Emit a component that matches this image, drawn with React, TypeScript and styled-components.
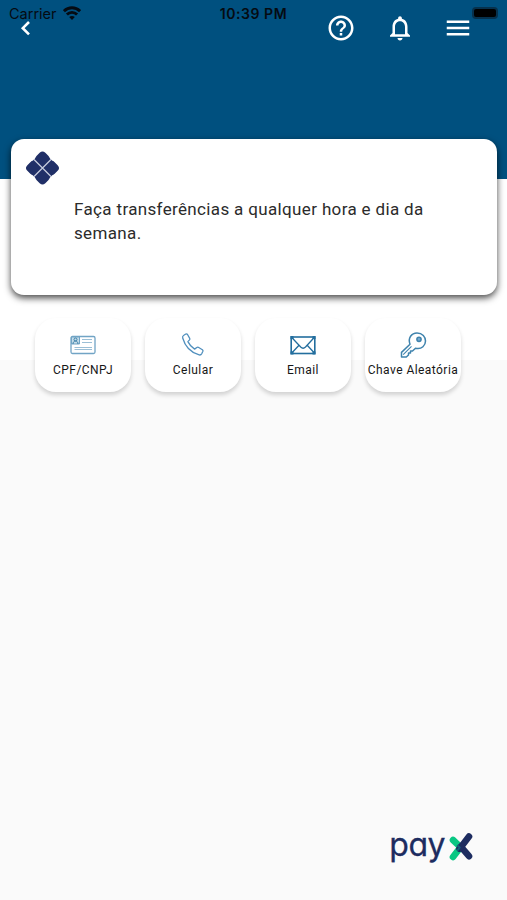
import React from 'react';
import styled, { createGlobalStyle } from 'styled-components';

const GlobalStyle = createGlobalStyle`
  * { box-sizing: border-box; }
  body { margin: 0; background: #fafafa; font-family: Roboto, sans-serif; }
`;

const Screen = styled.div`
  width: 507px;
  height: 900px;
  display: flex;
  flex-direction: column;
  background: #fafafa;
  overflow: hidden;
`;

const Header = styled.header`
  height: 179px;
  flex: none;
  background: #00507f;
`;

const StatusBar = styled.div`
  height: 28px;
  padding: 0 9px;
  display: grid;
  grid-template-columns: 1fr auto 1fr;
  align-items: center;
  color: #050b12;
  font: 500 14.5px/28px Inter, sans-serif;
`;

const Carrier = styled.div`
  display: flex;
  align-items: center;
  gap: 6px;
  font-weight: 400;
  letter-spacing: 0;
  svg { margin-bottom: 2px; }
`;

const Clock = styled.span`
  font-weight: 600;
  font-size: 14px;
  letter-spacing: 0.55px;
`;

const Battery = styled.span`
  justify-self: end;
  width: 26px;
  height: 12px;
  margin-bottom: 2px;
  border: 2px solid #06314d;
  border-radius: 4px;
  background: #000;
`;

const NavBar = styled.nav`
  height: 30px;
  margin-top: -15px;
  padding: 0 34px 0 9px;
  display: flex;
  align-items: center;
  justify-content: space-between;
  color: #fff;
`;

const NavActions = styled.div`
  display: flex;
  gap: 28.5px;
`;

const IconButton = styled.button`
  width: 30px;
  height: 30px;
  padding: 0;
  border: 0;
  background: none;
  color: inherit;
  display: grid;
  place-items: center;
`;

const Panel = styled.section`
  height: 181px;
  flex: none;
  background: #fff;
`;

const PixCard = styled.article`
  position: relative;
  height: 156px;
  margin: -40px 10px 0 10.5px;
  padding: 12px 15px;
  border-radius: 13px;
  background: #fff;
  box-shadow: 0 3px 7px 0 rgba(0, 0, 0, 0.72);
  svg { display: block; }
`;

const CardText = styled.p`
  width: 380px;
  margin: 12px 0 0 48.5px;
  color: #2b2b2b;
  font-size: 17px;
  line-height: 24px;
  letter-spacing: 0.35px;
`;

const KeyOptions = styled.div`
  display: flex;
  gap: 14px;
  margin: 23px 0 0 35px;
`;

const KeyOption = styled.button`
  width: 96px;
  height: 74px;
  padding: 13px 0 0;
  border: 0;
  border-radius: 21px;
  background: #fff;
  box-shadow: 0 3px 4px rgba(0, 0, 0, 0.16);
  color: #171717;
  display: flex;
  flex-direction: column;
  align-items: center;
  font: 400 12px/16px Roboto, sans-serif;
  letter-spacing: 0.45px;
  white-space: nowrap;
  svg { display: block; margin-bottom: 3px; flex: none; }
`;

const Footer = styled.footer`
  margin: auto 34px 32px auto;
  display: flex;
  align-items: center;
  gap: 4px;
`;

const LogoText = styled.span`
  padding-bottom: 4px;
  color: #1d2c60;
  font: 400 32px/38px Inter, sans-serif;
  font-feature-settings: 'cv11', 'ss01';
  letter-spacing: -0.5px;
  -webkit-text-stroke: 0.3px #1d2c60;
`;

const ChevronIcon = () => (
  <svg width="30" height="30" viewBox="0 0 30 30" fill="none" stroke="currentColor" strokeWidth="2.6">
    <path d="m20 9-6.2 6.2 6.2 6.2" />
  </svg>
);

const HelpIcon = () => (
  <svg width="30" height="30" viewBox="0 0 24 24" fill="currentColor">
    <path d="M11 18h2v-2h-2v2zm1-16C6.48 2 2 6.48 2 12s4.48 10 10 10 10-4.48 10-10S17.52 2 12 2zm0 18c-4.41 0-8-3.59-8-8s3.59-8 8-8 8 3.59 8 8-3.59 8-8 8zm0-14c-2.21 0-4 1.79-4 4h2c0-1.1.9-2 2-2s2 .9 2 2c0 2-3 1.75-3 5h2c0-2.25 3-2.5 3-5 0-2.21-1.79-4-4-4z" />
  </svg>
);

const BellIcon = () => (
  <svg width="30" height="30" viewBox="0 0 24 24" fill="currentColor">
    <path d="M12 22c1.1 0 2-.9 2-2h-4c0 1.1.9 2 2 2zm6-6v-5c0-3.07-1.63-5.64-4.5-6.32V4c0-.83-.67-1.5-1.5-1.5s-1.5.67-1.5 1.5v.68C7.64 5.36 6 7.92 6 11v5l-2 2v1h16v-1l-2-2zm-2 1H8v-6c0-2.48 1.51-4.5 4-4.5s4 2.02 4 4.5v6z" />
  </svg>
);

const MenuIcon = () => (
  <svg width="30" height="30" viewBox="0 0 24 24" fill="currentColor">
    <path d="M3 18h18v-2H3v2zm0-5h18v-2H3v2zm0-7v2h18V6H3z" />
  </svg>
);

const WifiIcon = () => (
  <svg width="18" height="14" viewBox="0 0 18 14" fill="none" stroke="currentColor" strokeWidth="2.9">
    <path d="M.9 5.2C5.5.6 12.5.6 17.1 5.2M3.9 8.5c2.9-2.9 7.3-2.9 10.2 0" />
    <path d="M9 13.9 6.2 11c1.6-1.5 4-1.5 5.6 0z" fill="currentColor" stroke="none" />
  </svg>
);

const PixIcon = () => (
  <svg width="34" height="34" viewBox="-16.5 -17 34 34" fill="#202f67">
    <g transform="rotate(45)">
      <rect x="-12" y="-12" width="24" height="24" rx="3.8" />
      <rect x="-12.7" y="-12.7" width="12.2" height="12.2" rx="4" />
      <rect x=".5" y="-12.7" width="12.2" height="12.2" rx="4" />
      <rect x="-12.7" y=".5" width="12.2" height="12.2" rx="4" />
      <rect x=".5" y=".5" width="12.2" height="12.2" rx="4" />
      <path d="M0-12V12M-12 0H12" stroke="#c5cbdc" strokeWidth="1.3" />
    </g>
  </svg>
);

const IdIcon = () => (
  <svg width="28" height="28" viewBox="0 0 28 28" fill="none" stroke="#71a4c5">
    <rect x="2" y="5.5" width="24" height="17" rx="1.5" strokeWidth="1.3" />
    <path d="M2.5 6h8v7h-8z" fill="#c5dce9" />
    <circle cx="6.5" cy="8.5" r="1.5" stroke="#397fa8" />
    <path d="M4 13c0-4 5-4 5 0" stroke="#397fa8" />
    <path d="M13 8.5h10M13 11.5h10M5.5 16.5H23M5.5 18.5H23" strokeWidth="1" opacity=".7" />
  </svg>
);

const PhoneIcon = () => (
  <svg width="28" height="28" viewBox="0 0 28 28" fill="none" stroke="#508fbd" strokeWidth="1.3" strokeLinejoin="round">
    <path d="M4.8 4.2 6.8 3q1-.4 1.7.5l2.2 3.8q.5.9-.2 1.6L8.9 10.6q2.4 4.9 6.7 7.5l2.2-1.6q.7-.5 1.5-.2l4.1 2.4q.9.7.5 1.6l-1.2 2.5q-.8 1.5-2.5 1.1Q7.4 20.3 3.7 7q-.5-1.9 1.1-2.8Z" />
  </svg>
);

const EmailIcon = () => (
  <svg width="28" height="28" viewBox="0 0 28 28" fill="none" stroke="#236e9e" strokeWidth="1.6">
    <rect x="2.2" y="6" width="23.6" height="16.5" />
    <path d="m3 6.7 8.7 9.3q2.4 2.4 4.8 0L25 6.7M3 21.8l7.5-8M25.2 21.8l-7.5-8" strokeWidth="1.3" />
    <path d="M1.5 5h3v3h-3zm22 0h3v3h-3zM1.5 20.5h3v3h-3zm22 0h3v3h-3z" fill="#236e9e" stroke="none" />
  </svg>
);

const KeyIcon = () => (
  <svg width="28" height="28" viewBox="0 0 28 28" fill="none" stroke="#3f83ad" strokeWidth="1.5" strokeLinejoin="round">
    <path d="M11 13.2C8.7 7 12.5 2 18 2s8.5 4 8.5 8-3.5 8.8-10 7.2l-3 2.8h-2v2h-2v2L7.3 26H2.5v-4.6Z" />
    <path d="m4.2 23.6 8.3-8.2" strokeWidth="1.1" />
    <circle cx="20" cy="8.3" r="2.1" fill="#78acd0" />
  </svg>
);

const LogoMark = () => (
  <svg width="24" height="30" viewBox="0 0 24 30" fill="none" strokeWidth="6.6" strokeLinecap="round" strokeLinejoin="round">
    <path d="m4 8 7.5 7.2L4 25" stroke="#08c783" />
    <path d="m20 4.6-8 10.3 8 9.3" stroke="#1d2c60" />
    <path d="m12 14.5-1.5 2" stroke="#1d2c60" />
    <path d="m8.7 13.8 2 1.7-2 2.6" stroke="#11617a" strokeWidth="2" />
  </svg>
);

const keyOptions = [
  { label: 'CPF/CNPJ', Icon: IdIcon },
  { label: 'Celular', Icon: PhoneIcon },
  { label: 'Email', Icon: EmailIcon },
  { label: 'Chave Aleatória', Icon: KeyIcon },
];

export default function App() {
  return (
    <Screen>
      <GlobalStyle />
      <Header>
        <StatusBar>
          <Carrier>Carrier <WifiIcon /></Carrier>
          <Clock>10:39 PM</Clock>
          <Battery />
        </StatusBar>
        <NavBar>
          <IconButton aria-label="Voltar"><ChevronIcon /></IconButton>
          <NavActions>
            <IconButton aria-label="Ajuda"><HelpIcon /></IconButton>
            <IconButton aria-label="Notificações"><BellIcon /></IconButton>
            <IconButton aria-label="Menu"><MenuIcon /></IconButton>
          </NavActions>
        </NavBar>
      </Header>
      <Panel>
        <PixCard>
          <PixIcon />
          <CardText>Faça transferências a qualquer hora e dia da semana.</CardText>
        </PixCard>
        <KeyOptions>
          {keyOptions.map(({ label, Icon }) => (
            <KeyOption key={label}><Icon />{label}</KeyOption>
          ))}
        </KeyOptions>
      </Panel>
      <Footer>
        <LogoText>pay</LogoText>
        <LogoMark />
      </Footer>
    </Screen>
  );
}
